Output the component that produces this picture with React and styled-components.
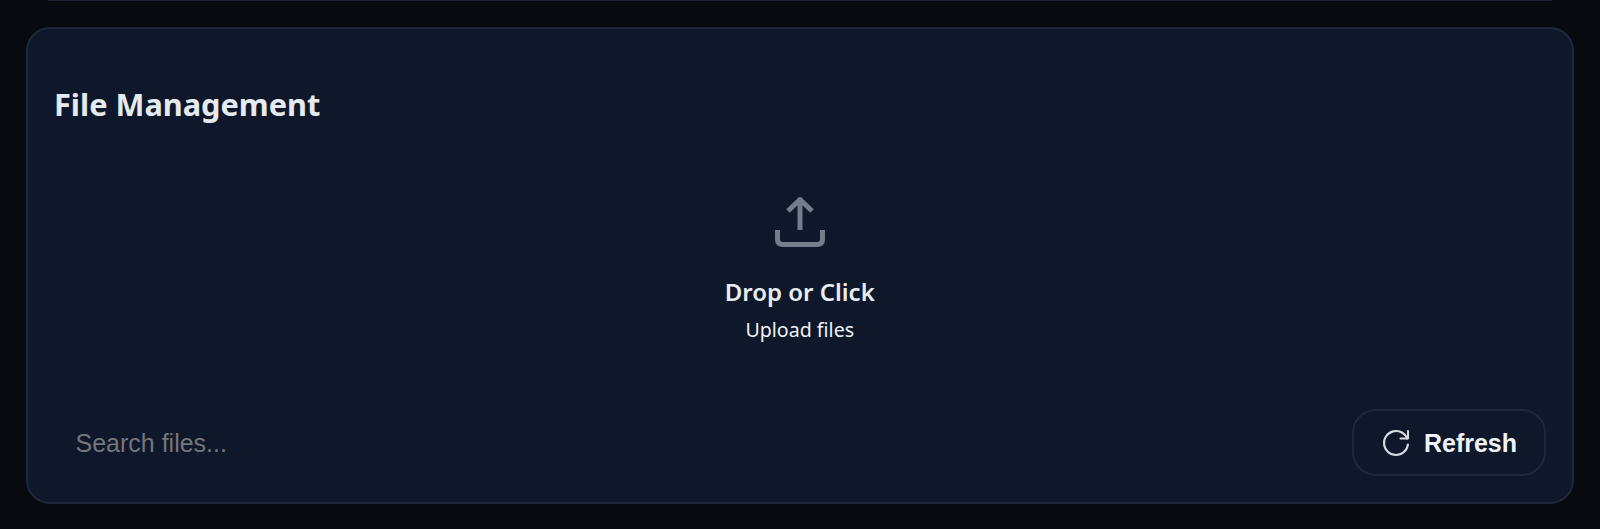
import React from "react";
import styled, { createGlobalStyle } from "styled-components";
import { TbReload } from "react-icons/tb";

const GlobalStyle = createGlobalStyle`
  html, body {
    margin: 0;
    padding: 0;
    height: 100%;
    background: #070a0e;
    overflow: hidden;
  }
  * {
    box-sizing: border-box;
  }
`;

const Page = styled.div`
  width: 1600px;
  height: 529px;
  background: #070a0e;
  display: flex;
  flex-direction: column;
`;

const TopEdge = styled.div`
  height: 1px;
  margin: 0 48px 26px;
  background: #1a2233;
`;

const Panel = styled.section`
  margin: 0 26px;
  height: 477px;
  padding: 55px 26.5px 26.5px 26px;
  display: flex;
  flex-direction: column;
  background: #0f172a;
  border: 2px solid #1f283a;
  border-radius: 24px;
`;

const Title = styled.h2`
  margin: 0;
  font-family: "Noto Sans", sans-serif;
  font-size: 30.7px;
  line-height: 40px;
  font-weight: 700;
  color: #e5e9f0;
`;

const DropZone = styled.div`
  flex: 1;
  display: flex;
  flex-direction: column;
  align-items: center;
  padding-top: 73px;
`;

const UploadIcon = styled.svg`
  width: 50px;
  height: 50px;
  color: #737d8c;
`;

const DropTitle = styled.div`
  margin-top: 29px;
  font-family: "Noto Sans", sans-serif;
  font-size: 24px;
  line-height: 32px;
  font-weight: 600;
  color: #e8edf4;
`;

const DropHint = styled.div`
  margin-top: 10px;
  font-family: "Noto Sans", sans-serif;
  font-size: 19.6px;
  line-height: 24px;
  color: #eef2f7;
`;

const Toolbar = styled.div`
  display: flex;
  align-items: center;
  justify-content: space-between;
`;

const SearchInput = styled.input`
  width: 600px;
  height: 66px;
  padding: 2px 21.5px 0;
  background: transparent;
  border: none;
  outline: none;
  font-family: "Liberation Sans", sans-serif;
  font-size: 25px;
  color: #e5e9f0;

  &::placeholder {
    color: #73767c;
    opacity: 1;
  }
`;

const RefreshButton = styled.button`
  width: 194px;
  height: 67px;
  display: flex;
  align-items: center;
  justify-content: center;
  gap: 10px;
  padding: 2px 2px 0 0;
  background: transparent;
  border: 2px solid #1f283a;
  border-radius: 24px;
  font-family: "Liberation Sans", sans-serif;
  font-size: 25px;
  font-weight: 700;
  color: #eef2f7;
`;

export default function App() {
  return (
    <Page>
      <GlobalStyle />
      <TopEdge />
      <Panel>
        <Title>File Management</Title>
        <DropZone>
          <UploadIcon viewBox="0 0 50 50" fill="none" stroke="currentColor" strokeWidth="5">
            <path d="M25 2 V33 M13 14 L25 2.5 L37 14" />
            <path d="M2.5 33 V42 Q2.5 47.5 8 47.5 H42 Q47.5 47.5 47.5 42 V33" />
          </UploadIcon>
          <DropTitle>Drop or Click</DropTitle>
          <DropHint>Upload files</DropHint>
        </DropZone>
        <Toolbar>
          <SearchInput placeholder="Search files..." />
          <RefreshButton>
            <TbReload size={36} strokeWidth={1.4} color="#d5dae2" />
            Refresh
          </RefreshButton>
        </Toolbar>
      </Panel>
    </Page>
  );
}
